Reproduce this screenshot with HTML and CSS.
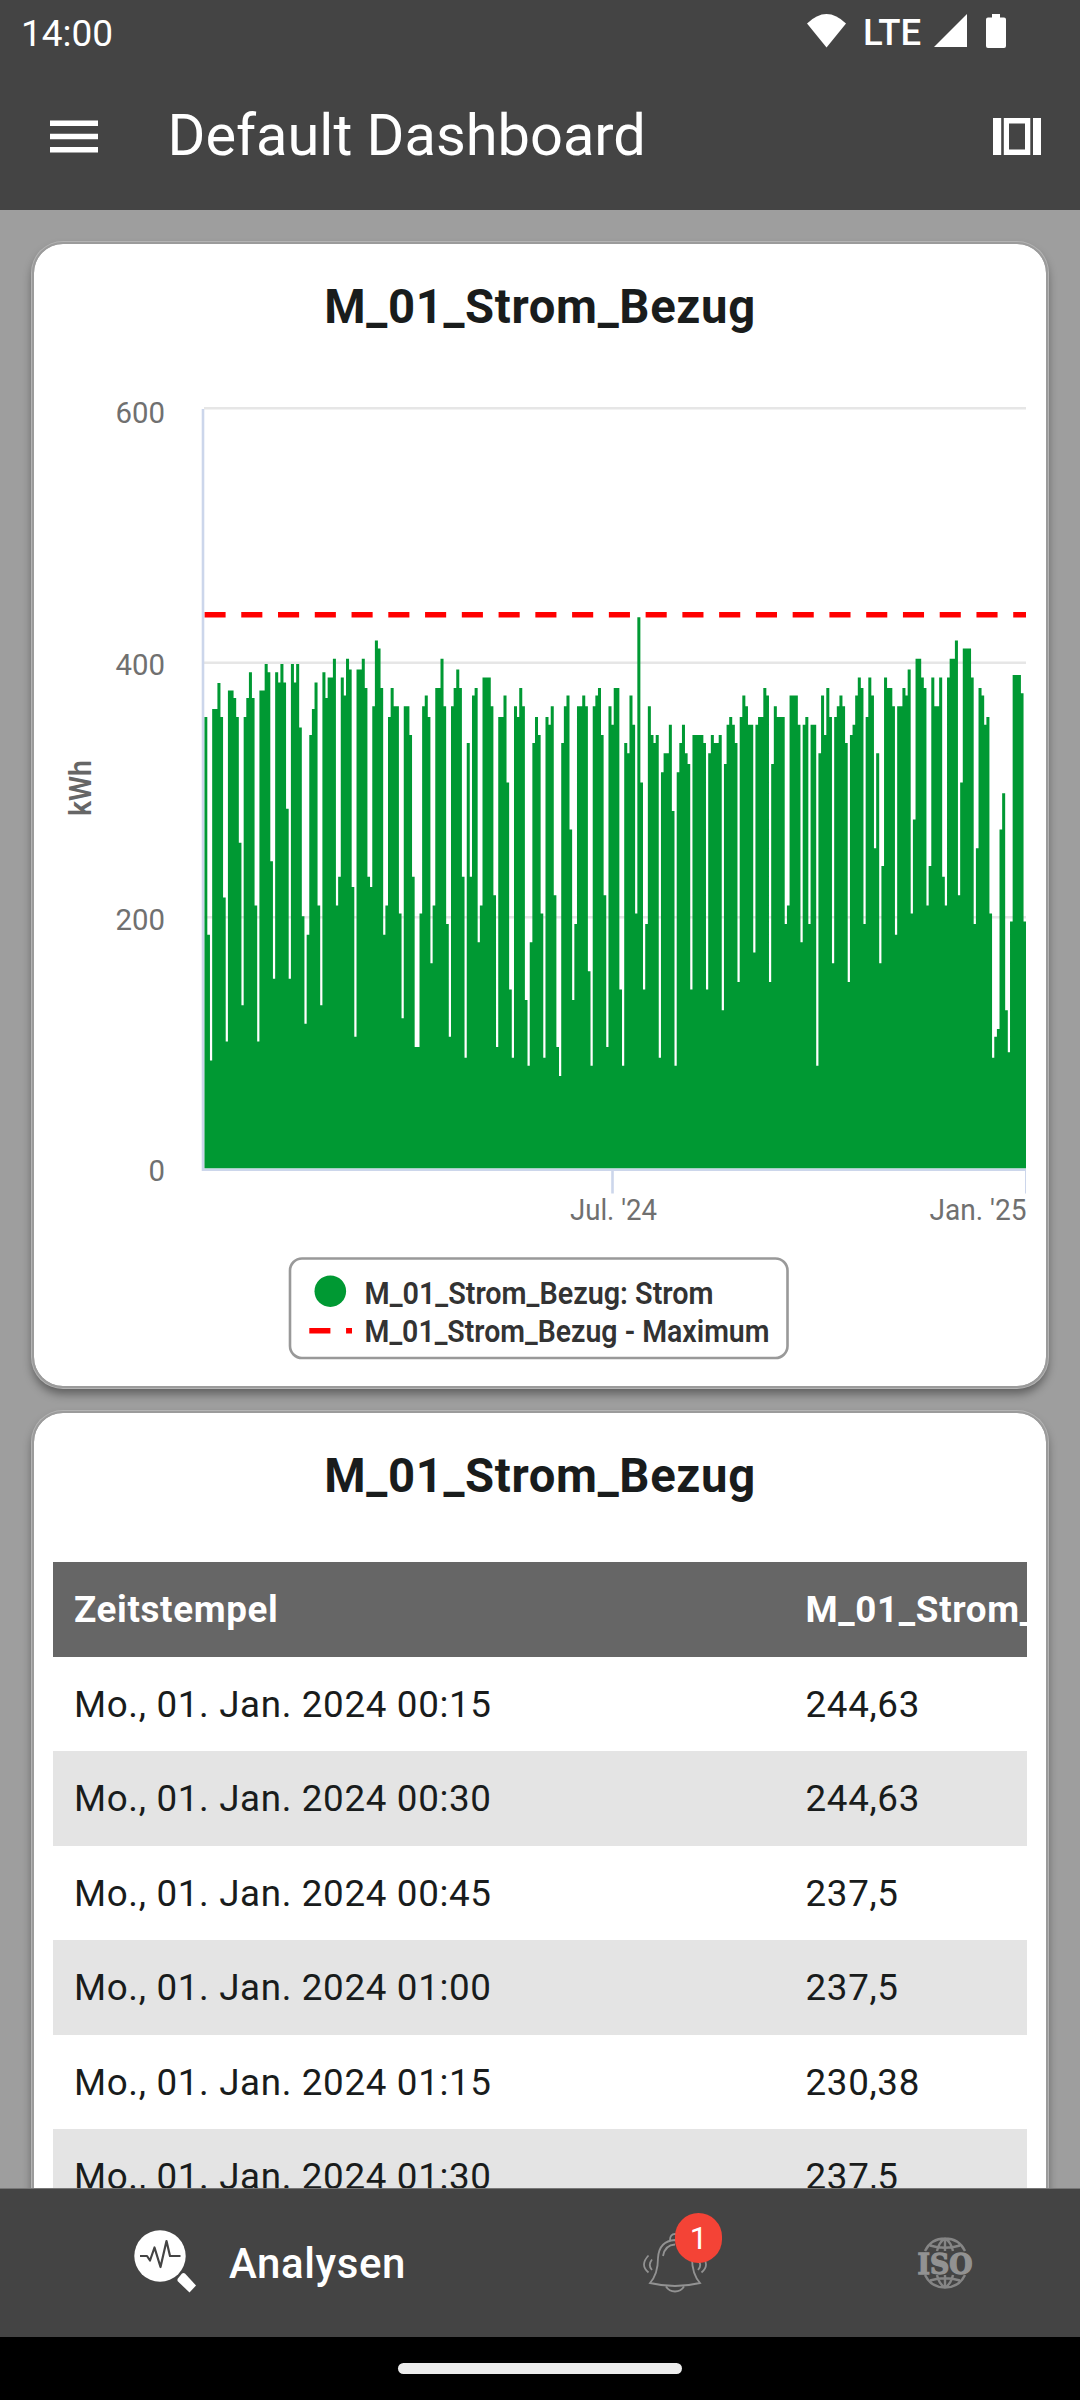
FILE: index.html
```html
<!DOCTYPE html>
<html lang="de">
<head>
  <meta charset="UTF-8">
  <meta name="viewport" content="width=device-width, initial-scale=1.0">
  <title>Default Dashboard</title>
  <link rel="stylesheet" href="styles.css">
</head>
<body>
  <div class="app">
    <header class="header">
      <div class="status-bar">
        <span>14:00</span>
        <div class="status-icons">
          <svg class="wifi" viewBox="0 0 39 34"><path d="M0 9.5Q19.500-9.500 39 9.500L19.500 33.500Z"/></svg>
          <span class="network">LTE</span>
          <svg class="signal" viewBox="0 0 33 33"><path d="M33 0V33H0Z"/></svg>
          <svg class="battery" viewBox="0 0 20 34"><path d="M6 0h8v3.500h4q2 0 2 2V32q0 2-2 2H2q-2 0-2-2V5.500q0-2 2-2h4z"/></svg>
        </div>
      </div>
      <div class="app-bar">
        <svg class="menu-icon" viewBox="0 0 48 33"><path d="M0 .5h48v5.500H0zM0 13.700h48v5.500H0zM0 27h48v5.500H0z"/></svg>
        <h1>Default Dashboard</h1>
        <svg class="carousel-icon" viewBox="0 0 48 37"><path fill-rule="evenodd" d="M0 0h8.200v37H0zM40 0h8v37h-8zM10.800 0h26.500v37H10.800zM16 5.500v26h16v-26z"/></svg>
      </div>
    </header>

    <main class="content">
      <section class="card chart-card">
        <h2>M_01_Strom_Bezug</h2>
        <svg class="chart" viewBox="34 370 1012 1016">
          <path class="grid" d="M204 408.300H1026M204 662.700H1026M204 917.300H1026"/>
          <path id="bars" class="bars"/>
          <path class="maximum" d="M204.500 614.800H1026"/>
          <path class="axis" d="M203 409V1169.700H1026M612.500 1170V1193.500"/>
          <path class="axis thin" d="M1025.500 1170V1193.500"/>

          <g class="labels">
            <text x="115.500" y="422.500" textLength="49.500" lengthAdjust="spacingAndGlyphs">600</text>
            <text x="115.500" y="675" textLength="49.500" lengthAdjust="spacingAndGlyphs">400</text>
            <text x="115.500" y="929.500" textLength="49.500" lengthAdjust="spacingAndGlyphs">200</text>
            <text x="148.500" y="1181.300" textLength="16.500" lengthAdjust="spacingAndGlyphs">0</text>
            <text x="570" y="1220.200" textLength="87" lengthAdjust="spacingAndGlyphs">Jul. '24</text>
            <text x="929.500" y="1220.200" textLength="97" lengthAdjust="spacingAndGlyphs">Jan. '25</text>
            <text class="unit" transform="translate(91 816) rotate(-90)" textLength="56" lengthAdjust="spacingAndGlyphs">kWh</text>
          </g>

          <g class="legend">
            <rect x="290" y="1258.500" width="497.500" height="99.500" rx="12"/>
            <circle cx="330.300" cy="1291.200" r="15.800"/>
            <path class="maximum" d="M309.300 1330.700H352"/>
            <text x="364.500" y="1304.300" textLength="349" lengthAdjust="spacingAndGlyphs">M_01_Strom_Bezug: Strom</text>
            <text x="364.500" y="1341.700" textLength="405" lengthAdjust="spacingAndGlyphs">M_01_Strom_Bezug - Maximum</text>
          </g>
        </svg>
      </section>

      <section class="card table-card">
        <h2>M_01_Strom_Bezug</h2>
        <div class="table">
          <div class="row head"><span>Zeitstempel</span><span>M_01_Strom_Bezug</span></div>
          <div class="row"><span>Mo., 01. Jan. 2024 00:15</span><span>244,63</span></div>
          <div class="row"><span>Mo., 01. Jan. 2024 00:30</span><span>244,63</span></div>
          <div class="row"><span>Mo., 01. Jan. 2024 00:45</span><span>237,5</span></div>
          <div class="row"><span>Mo., 01. Jan. 2024 01:00</span><span>237,5</span></div>
          <div class="row"><span>Mo., 01. Jan. 2024 01:15</span><span>230,38</span></div>
          <div class="row"><span>Mo., 01. Jan. 2024 01:30</span><span>237,5</span></div>
        </div>
      </section>
    </main>

    <nav class="bottom-nav">
      <a class="nav-item active">
        <svg class="search-icon" viewBox="0 0 64 66">
          <circle cx="26" cy="26" r="25.700"/>
          <path d="M43.500 49L48 43.500Q49.500 42.500 51 43.500L62 55.500L55.500 62.500L43.500 51Z"/>
          <path class="pulse" d="M6 26h7l3 4.500L20.500 17.500L26.500 37L32.500 11L36 26h10.500"/>
        </svg>
        <span>Analysen</span>
      </a>
      <a class="nav-item alarms">
        <svg class="bell-icon" viewBox="0 0 64 60">
          <path d="M7 50Q15 41 15 25Q16 8 32 7Q48 8 49 25Q49 41 57 50Q32 56 7 50ZM27 7Q27 1 32 1T37 7M20 23Q22 12 32 11.500M23 53.500Q26 58.500 32 58.500T41 53.500M5.500 22.500Q-3.500 32 5.500 39.500M9 26.500Q4.500 32 9 37M58.500 22.500Q67.500 32 58.500 39.500M55 26.500Q59.500 32 55 37"/>
        </svg>
        <span class="badge">1</span>
      </a>
      <a class="nav-item iso">
        <svg class="iso-icon" viewBox="0 0 56 52">
          <path d="M8 14Q14 1.500 28 1.500T48 14M8 38Q14 50.500 28 50.500T48 38M28 1V14M28 38V51M20 14Q22 5 28 1.500Q34 5 36 14M20 38Q22 47 28 50.500Q34 47 36 38M13 8.500Q28 13 43 8.500M13 43.500Q28 39 43 43.500"/>
          <text x="0.500" y="36.500" textLength="55" lengthAdjust="spacingAndGlyphs">ISO</text>
        </svg>
      </a>
    </nav>
    <div class="gesture-bar"><div class="pill"></div></div>
  </div>

  <script>
    // top edge of every column, measured down the plot (base line is 1488)
    const tops = [
      346, 897, 1215, 326, 326, 260, 346, 803, 1167, 279, 279, 298, 346, 664, 1075,
      346, 298, 233, 298, 823, 1167, 279, 279, 212, 233, 711, 1008, 233, 259, 212,
      259, 578, 1008, 212, 259, 212, 373, 850, 1122, 897, 392, 326, 259, 823, 1075,
      233, 298, 246, 246, 199, 823, 750, 246, 292, 199, 226, 776, 1155, 226, 226,
      199, 273, 750, 776, 319, 153, 173, 273, 897, 823, 346, 273, 319, 319, 843,
      1108, 319, 319, 392, 750, 1181, 1181, 843, 319, 292, 346, 969, 823, 273, 273,
      199, 319, 870, 1155, 319, 273, 226, 273, 750, 1208, 412, 750, 292, 273, 916,
      823, 246, 246, 246, 319, 797, 1181, 346, 346, 292, 512, 1035, 1208, 319, 346,
      273, 319, 1062, 1228, 916, 412, 346, 392, 843, 1208, 346, 366, 319, 797, 1181,
      1254, 412, 319, 292, 631, 1062, 870, 319, 319, 292, 319, 989, 1228, 319, 292,
      273, 392, 797, 1181, 319, 366, 273, 273, 1035, 1228, 412, 438, 292, 366, 843,
      94, 512, 1035, 870, 319, 392, 412, 392, 1208, 486, 438, 438, 366, 584, 1228,
      486, 412, 366, 438, 465, 1035, 392, 392, 392, 392, 412, 1035, 438, 392, 412,
      412, 392, 1088, 465, 366, 346, 366, 412, 1016, 346, 292, 319, 366, 366, 942,
      366, 346, 346, 273, 292, 1016, 465, 319, 346, 346, 346, 870, 823, 292, 292,
      292, 366, 916, 366, 346, 870, 366, 366, 1228, 438, 292, 392, 273, 346, 969,
      346, 319, 292, 319, 412, 1016, 392, 366, 292, 246, 273, 870, 346, 246, 292,
      678, 438, 969, 723, 246, 273, 273, 319, 897, 319, 319, 273, 292, 226, 843,
      605, 199, 199, 246, 273, 823, 723, 246, 319, 319, 246, 750, 823, 246, 199,
      199, 153, 797, 512, 173, 173, 173, 246, 870, 678, 273, 292, 366, 346, 843,
      1208, 1155, 1135, 631, 539, 1088, 1194, 863, 240, 240, 240, 286, 863
    ];
    const left = 204.3;
    const right = 1026;
    const base = 1168.5;
    const step = 2.6245;

    let d = '';
    tops.forEach((top, i) => {
      const x = left + i * step;
      const y = base - (1488 - top) / 2.529;
      const end = Math.min(x + step + 0.4, right);
      d += `M${x.toFixed(2)} ${base}V${y.toFixed(1)}H${end.toFixed(2)}V${base}Z`;
    });
    document.getElementById('bars').setAttribute('d', d);
  </script>
</body>
</html>
```

FILE: styles.css
```css
* {
  box-sizing: border-box;
}
body {
  margin: 0;
  font-family: Roboto, sans-serif;
  color: #191c1c;
}
svg {
  display: block;
  flex: none;
}
h1, h2 {
  margin: 0;
}
.app {
  display: flex;
  flex-direction: column;
  width: 1080px;
  height: 2400px;
  overflow: hidden;
  background: #9e9e9e;
}

/* header */
.header {
  flex: none;
  height: 210px;
  background: #444;
  color: #fff;
  fill: #fff;
}
.status-bar {
  display: flex;
  justify-content: space-between;
  height: 67px;
  padding: 0 74px 0 21px;
  font-size: 37px;
  line-height: 67px;
}
.status-icons {
  display: flex;
  align-items: flex-start;
}
.status-icons svg {
  margin-top: 14px;
}
.wifi {
  width: 39px;
  height: 34px;
}
.network {
  width: 88px;
  padding-left: 17px;
  font-size: 36.5px;
  font-weight: 500;
  line-height: 65px;
}
.signal {
  width: 33px;
  height: 33px;
}
.battery {
  width: 20px;
  height: 34px;
  margin-left: 19px;
}
.app-bar {
  display: flex;
  align-items: center;
  height: 138px;
  padding: 0 39px 0 49.5px;
}
.app-bar h1 {
  flex: 1;
  margin-left: 70px;
  padding-bottom: 2px;
  font-size: 57.75px;
  font-weight: 400;
}
.menu-icon {
  width: 48px;
  height: 33px;
}
.carousel-icon {
  width: 48px;
  height: 37px;
}

/* cards */
.content {
  flex: 1;
  min-height: 0;
  display: flex;
  flex-direction: column;
  gap: 23px;
  padding: 32px 32px 0;
  overflow: hidden;
}
.card {
  flex: none;
  border: 2px solid #9b9b9b;
  border-radius: 31px;
  background: #fff;
  background-clip: padding-box;
  box-shadow: 0 0 0 1px #b4b4b4, 0 6px 10px rgba(0, 0, 0, 0.4);
}
.chart-card {
  height: 1146px;
}
.table-card {
  height: 1000px;
}
.card h2 {
  height: 126px;
  font-size: 47.25px;
  font-weight: 700;
  line-height: 126px;
  letter-spacing: 0.66px;
  text-align: center;
}

/* chart */
.chart {
  width: 1012px;
  height: 1016px;
}
.grid {
  stroke: #e6e6e6;
  stroke-width: 2.6;
}
.bars {
  fill: #009933;
}
.axis {
  fill: none;
  stroke: #ccd6eb;
  stroke-width: 2.6;
}
.axis.thin {
  stroke-width: 1;
}
.maximum {
  stroke: #f00;
  stroke-width: 5.4;
  stroke-dasharray: 21.1 15.66;
}
.labels {
  fill: #707070;
  font-size: 29.5px;
}
.unit {
  fill: #666;
  font-size: 31px;
  font-weight: 600;
}
.legend rect {
  fill: #fff;
  stroke: #999;
  stroke-width: 2.6;
}
.legend circle {
  fill: #009933;
}
.legend text {
  fill: #333;
  font-size: 31px;
  font-weight: 600;
}

/* table */
.table {
  margin: 23px 19px 0;
  overflow: hidden;
}
.row {
  display: grid;
  grid-template-columns: 731.5px 600px;
  height: 94.5px;
  padding-left: 21px;
  font-size: 36.75px;
  line-height: 95.5px;
  letter-spacing: 0.66px;
  white-space: nowrap;
}
.row:nth-child(odd) {
  background: #e4e4e4;
}
.row.head {
  background: #666;
  color: #fff;
  font-weight: 700;
}

/* bottom navigation */
.bottom-nav {
  flex: none;
  display: flex;
  height: 148px;
  background: #444;
  box-shadow: 0 -1px 0 #777;
  z-index: 1;
}
.nav-item {
  display: flex;
  align-items: center;
  position: relative;
}
.active {
  width: 539px;
  padding-left: 134px;
  color: #fff;
  fill: #fff;
  font-size: 42px;
  font-weight: 500;
  letter-spacing: 0.6px;
}
.active span {
  margin-left: 31px;
}
.search-icon {
  width: 64px;
  height: 66px;
}
.pulse {
  fill: none;
  stroke: #444;
  stroke-width: 2.2;
  stroke-linejoin: round;
}
.alarms {
  width: 271px;
  justify-content: center;
}
.bell-icon {
  width: 64px;
  height: 60px;
  fill: none;
  stroke: #929292;
  stroke-width: 1.8;
}
.badge {
  position: absolute;
  left: 136px;
  top: 24px;
  width: 47px;
  height: 50px;
  border-radius: 24px;
  background: #f44336;
  color: #fff;
  font-size: 31.5px;
  line-height: 51px;
  text-align: center;
}
.iso {
  flex: 1;
  justify-content: center;
}
.iso-icon {
  width: 56px;
  height: 52px;
  fill: none;
  stroke: #858585;
  stroke-width: 2.4;
}
.iso-icon text {
  fill: #929292;
  stroke: #929292;
  stroke-width: 1.4;
  font-family: "DejaVu Serif", serif;
  font-size: 28px;
  font-weight: 700;
}
.gesture-bar {
  flex: none;
  height: 63px;
  padding-top: 26px;
  background: #000;
}
.pill {
  width: 284px;
  height: 11px;
  margin: 0 auto;
  border-radius: 6px;
  background: #ececec;
}
```
